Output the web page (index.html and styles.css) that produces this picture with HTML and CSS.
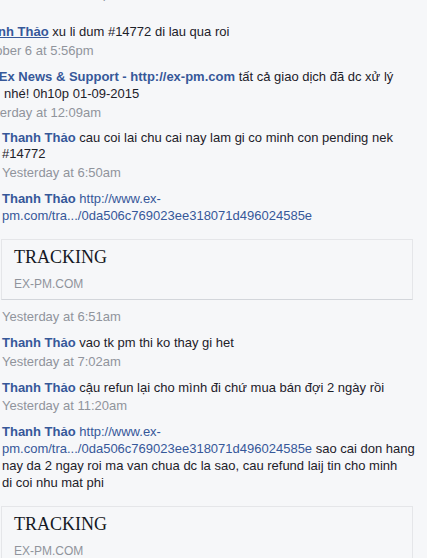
FILE: index.html
```html
<!DOCTYPE html>
<html lang="vi">
<head>
  <meta charset="UTF-8" />
  <meta name="viewport" content="width=device-width, initial-scale=1.0"/>
  <title>Comments</title>
  <link rel="stylesheet" href="styles.css">
</head>
<body>
  <div class="thread">
    <div class="older">
      <div class="cut"><div class="time">November 28 at 11:48pm</div></div>
      <div class="comment">
        <p><a class="name hover" href="#">Thanh Thảo</a> xu li dum #14772 di lau qua roi</p>
        <div class="time">October 6 at 5:56pm</div>
      </div>
      <div class="comment">
        <p><a class="name" href="#">PM-Ex News &amp; Support - http://ex-pm.com</a> tất cả giao dịch đã dc xử lý<br><span class="cont">nhé! 0h10p 01-09-2015</span></p>
        <div class="time">Yesterday at 12:09am</div>
      </div>
    </div>

    <div class="comment">
      <p><a class="name" href="#">Thanh Thảo</a> cau coi lai chu cai nay lam gi co minh con pending nek #14772</p>
      <div class="time">Yesterday at 6:50am</div>
    </div>

    <div class="comment">
      <p><a class="name" href="#">Thanh Thảo</a> <a class="link" href="#">http://www.ex-<br>pm.com/tra.../0da506c769023ee318071d496024585e</a></p>
      <div class="card">
        <div class="card-title">TRACKING</div>
        <div class="card-site">EX-PM.COM</div>
      </div>
      <div class="time">Yesterday at 6:51am</div>
    </div>

    <div class="comment">
      <p><a class="name" href="#">Thanh Thảo</a> vao tk pm thi ko thay gi het</p>
      <div class="time">Yesterday at 7:02am</div>
    </div>

    <div class="comment">
      <p><a class="name" href="#">Thanh Thảo</a> cậu refun lại cho mình đi chứ mua bán đợi 2 ngày rồi</p>
      <div class="time">Yesterday at 11:20am</div>
    </div>

    <div class="comment">
      <p class="hard"><a class="name" href="#">Thanh Thảo</a> <a class="link" href="#">http://www.ex-<br>pm.com/tra.../0da506c769023ee318071d496024585e</a> sao cai don hang<br>nay da 2 ngay roi ma van chua dc la sao, cau refund laij tin cho minh<br>di coi nhu mat phi</p>
      <div class="card">
        <div class="card-title">TRACKING</div>
        <div class="card-site">EX-PM.COM</div>
      </div>
    </div>
  </div>
</body>
</html>
```

FILE: styles.css
```css
body { margin:0; background:#f6f7f9; color:#1d2129; font-family:"Liberation Sans", Arial, sans-serif; font-size:13px; line-height:16.7px; }
.thread { width:412px; padding-left:2px; }
.older { margin-left:-27px; white-space:nowrap; }
.older .comment:last-child { margin-bottom:8px; }
.cut { height:2.85px; overflow:hidden; margin-bottom:21.6px; }
.cut .time { margin-top:-13.85px; }
.comment { margin-bottom:9.3px; }
.comment p { margin:0; }
.comment p.hard { white-space:nowrap; }
.cont { margin-left:29px; }
.time { margin-top:2.2px; color:#90949c; }
.name { color:#365899; font-weight:bold; text-decoration:none; }
.name.hover { text-decoration:underline; }
.link { color:#365899; text-decoration:none; }
.card { margin:14.5px 1px 0 -1px; padding:6px 12px 7px; border:1px solid #e5e6e9; border-bottom-color:#d3d6db; }
.card-title { font-family:"Liberation Serif", "Times New Roman", serif; font-size:18px; line-height:22px; color:#141823; }
.card-site { margin-top:8px; font-size:12px; line-height:16px; color:#90949c; }
.card + .time { margin-top:8.5px; }
```
